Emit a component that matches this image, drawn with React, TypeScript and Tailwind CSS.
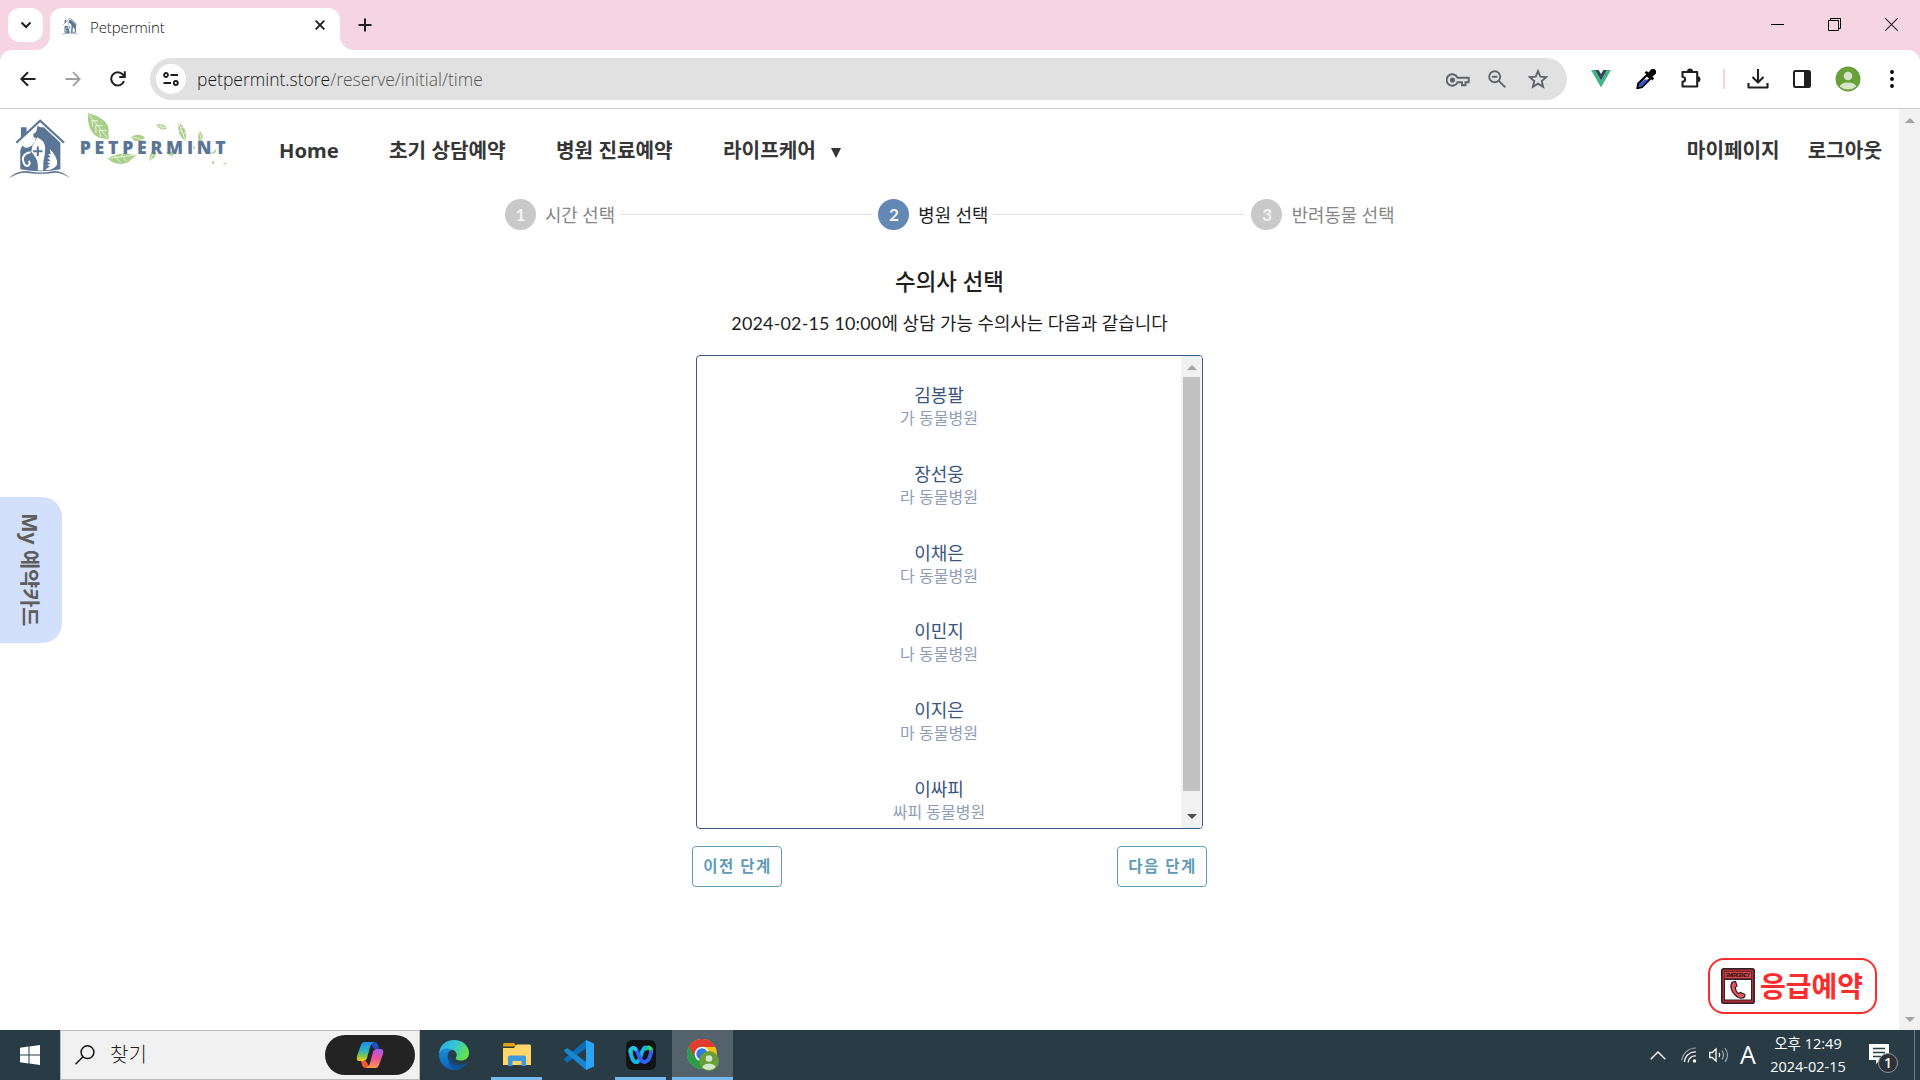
import React from "react";

const KR = "font-['Noto_Sans','Noto_Sans_CJK_KR',sans-serif]";

const doctors = [
  { name: "김봉팔", clinic: "가 동물병원" },
  { name: "장선웅", clinic: "라 동물병원" },
  { name: "이채은", clinic: "다 동물병원" },
  { name: "이민지", clinic: "나 동물병원" },
  { name: "이지은", clinic: "마 동물병원" },
  { name: "이싸피", clinic: "싸피 동물병원" },
];

/** House mark with the pets; drawn on a 190x180 canvas. */
function HouseMark({ className }: { className: string }) {
  return (
    <svg viewBox="0 0 190 180" className={className} preserveAspectRatio="none">
      <path d="M25 76 L97 11 L169 76" fill="none" stroke="#5a7596" strokeWidth="6.5" />
      <path d="M39 30h17v18l-17 15z" fill="#5a7596" />
      <path
        d="M89 26 L97 30 L108 30 L158 76 V154 Q98 166 37 154 V98 L43 84 L52 91 L62 90 L72 84 L82 72 L84 62 L77 59 L76 52 L86 42Z"
        fill="#5a7596"
      />
      <path d="M88 60 Q84 72 74 84 L70 102 L82 118 Q92 132 90 158 H106 L107 128 Q112 112 112 96 Q114 76 98 66Z" fill="#fff" />
      <path d="M68 104 Q44 108 45 126 Q48 146 60 144 Q70 138 62 130" fill="none" stroke="#fff" strokeWidth="6" />
      <path d="M126 94 Q152 122 148 140 Q138 158 112 156 L126 146 L118 142 L128 138 L118 132 L128 128 L119 121 L128 118 L121 109 L129 110Z" fill="#fff" />
      <path d="M90 87v28M76 101h28" stroke="#5a7596" strokeWidth="6" />
      <path d="M1 182 Q28 156 60 160 Q98 168 135 160 Q160 156 189 182 Q160 162 135 165 Q98 170 60 165 Q32 162 1 182Z" fill="#5a7596" />
    </svg>
  );
}

function Leaf({ d, vein }: { d: string; vein: string }) {
  return (
    <>
      <path d={d} fill="#a9cf8a" />
      <path d={vein} fill="none" stroke="#fff" strokeWidth="2.2" />
    </>
  );
}

function Wordmark() {
  return (
    <svg viewBox="240 34 450 170" className="h-[56.7px] w-[150px]">
      <Leaf d="M264 40 Q322 56 326 88 Q324 104 328 122 Q322 118 302 116 Q260 100 264 40Z" vein="M266 44 L328 122 M276 62 L278 80 M276 62 L294 64 M287 78 L288 100 M287 78 L308 78 M298 92 L302 112 M298 92 L320 92" />
      <Leaf d="M394 112 Q412 98 434 112 L426 124 H404Z" vein="M400 112 L432 122" />
      <Leaf d="M468 76 Q486 66 503 86 Q482 96 468 76Z" vein="M470 78 L502 85 M480 80 L486 74 M482 82L490 88" />
      <Leaf d="M536 70 Q564 84 556 124 Q530 106 536 70Z" vein="M537 72 L556 122 M542 84 L552 84 M546 96 L538 92 M550 102 L558 98" />
      <Leaf d="M598 92 Q612 104 606 124 H596 Q592 108 598 92Z" vein="M598 94 L604 122" />
      <Leaf d="M322 176 Q350 160 382 162 L410 166 Q390 182 384 188 Q350 202 322 176Z" vein="M326 176 L406 166 M342 174 L350 164 M348 174 L362 188 M362 172 L370 162 M368 172 L380 184" />
      <Leaf d="M458 148 Q476 160 462 174 Q452 180 446 186 Q448 166 458 148Z" vein="M448 184 L462 158" />
      <Leaf d="M498 158 L520 154 L518 172 Q504 168 498 158Z" vein="M500 160 L518 170" />
      <Leaf d="M630 160 Q642 154 650 146 Q648 168 630 160Z" vein="M634 160 L646 152" />
      <path d="M578 140l8 2-4 8zM635 188l9-5-4 12zM670 188l11 5-9 1z" fill="#a9cf8a" />
      <text
        x="239"
        y="163"
        textLength="438"
        lengthAdjust="spacing"
        className="fill-[#5a7596] font-['Open_Sans'] text-[53px] font-extrabold"
      >
        PETPERMINT
      </text>
    </svg>
  );
}

function TabStrip() {
  return (
    <div className="flex h-[50px] items-start bg-[#f6d5e3]">
      <div className="mt-2 ml-2 flex h-[34px] w-[35px] items-center justify-center rounded-xl bg-white">
        <svg viewBox="0 0 12 12" className="h-3 w-3">
          <path d="M1.500 3.500 6 8l4.500-4.500" fill="none" stroke="#1f1f1f" strokeWidth="2" />
        </svg>
      </div>
      <div className="relative mt-2 ml-[7px] flex h-[42px] w-[290px] items-center rounded-t-xl bg-white">
        <svg className="absolute bottom-0 -left-3.5 h-3.5 w-3.5" viewBox="0 0 14 14">
          <path d="M14 0V14H0A14 14 0 0 0 14 0Z" fill="#fff" />
        </svg>
        <svg className="absolute -right-3.5 bottom-0 h-3.5 w-3.5" viewBox="0 0 14 14">
          <path d="M0 0V14H14A14 14 0 0 1 0 0Z" fill="#fff" />
        </svg>
        <HouseMark className="mb-[7px] ml-[11px] h-[18px] w-[18px]" />
        <span className="ml-[11px] flex-1 pb-[4px] font-['Open_Sans'] text-[15px] font-light tracking-[-0.1px] text-[#111]">Petpermint</span>
        <svg viewBox="0 0 10 10" className="mr-[15px] mb-2 h-2.5 w-2.5">
          <path d="M.7.7l8.600 8.600M9.300.7L.7 9.300" stroke="#1f1f1f" strokeWidth="1.9" />
        </svg>
      </div>
      <svg viewBox="0 0 14 14" className="mt-[18px] ml-[18px] h-3.5 w-3.5">
        <path d="M7 .5v13M.5 7h13" stroke="#1f1f1f" strokeWidth="2" />
      </svg>
      <div className="mt-[18px] mr-[22px] ml-auto flex gap-[44px]">
        <svg viewBox="0 0 13 13" className="h-[13px] w-[13px]"><path d="M0 6.500h13" stroke="#000" /></svg>
        <svg viewBox="0 0 13 13" className="h-[13px] w-[13px]"><path d="M.5 2.500h10v10h-10zM2.500 2.500v-2h10v10h-2" fill="none" stroke="#000" /></svg>
        <svg viewBox="0 0 13 13" className="h-[13px] w-[13px]"><path d="M.3.3l12.400 12.400M12.700.3L.3 12.700" stroke="#222" strokeWidth="1.1" /></svg>
      </div>
    </div>
  );
}

function Toolbar() {
  return (
    <div className="bg-[#f6d5e3]">
      <div className="flex h-[59px] items-center rounded-t-xl border-b border-[#cacaca] bg-white">
        <svg viewBox="0 0 16 16" className="ml-5 h-4 w-4"><path d="M15.500 8H1.800M8 1.200L1.300 8 8 14.800" fill="none" stroke="#1f1f1f" strokeWidth="2" /></svg>
        <svg viewBox="0 0 16 16" className="ml-[29px] h-4 w-4"><path d="M.5 8h13.700M8 1.200L14.700 8 8 14.800" fill="none" stroke="#a0a0a0" strokeWidth="1.800" /></svg>
        <svg viewBox="0 0 16 16" className="ml-[29px] h-4 w-4"><path d="M14 10.200A6.600 6.600 0 1 1 12.800 3.500L14.600 5.200M14.800.3v5.600H9.300" fill="none" stroke="#1f1f1f" strokeWidth="2" /></svg>
        <div className="ml-6 flex h-[42px] w-[1417px] items-center rounded-full bg-[#e1e1e1]">
          <div className="ml-1.5 flex h-[30px] w-[30px] items-center justify-center rounded-full bg-white">
            <svg viewBox="0 0 16 14" className="h-3.5 w-4">
              <g fill="none" stroke="#1f1f1f" strokeWidth="1.800">
                <circle cx="3" cy="3" r="2" /><path d="M7.500 3H15M.5 11H8" /><circle cx="12.800" cy="11" r="2" />
              </g>
            </svg>
          </div>
          <span className="mt-px ml-[11px] flex-1 font-['Open_Sans'] text-[17.500px] font-light text-[#1a1a1a]">
            petpermint.store<span className="text-[#555]">/reserve/initial/time</span>
          </span>
          <svg viewBox="0 0 24 14" className="mt-0.5 h-3.5 w-6">
            <g fill="none" stroke="#5f6368" strokeWidth="1.900"><path d="M11.500 4.700A5.700 5.700 0 1 0 11.500 9.300H16v3h3.500v-3H22.700V4.700Z" /><circle cx="6.500" cy="7" r="1.600" fill="#5f6368" /></g>
          </svg>
          <svg viewBox="0 0 18 18" className="ml-[18px] h-[18px] w-[18px]">
            <g fill="none" stroke="#5f6368" strokeWidth="1.900"><circle cx="6.700" cy="6.700" r="5.500" /><path d="M4 6.700h5.400M10.800 10.800l6.500 6.500" /></g>
          </svg>
          <svg viewBox="0 0 20 20" className="mr-[19px] ml-[22px] h-5 w-5">
            <path d="M10 2.200l2.300 5.400 5.900.5-4.500 3.900 1.400 5.800L10 14.700l-5.100 3.100L6.300 12 1.800 8.100l5.900-.5z" fill="none" stroke="#5f6368" strokeWidth="1.900" />
          </svg>
        </div>
        <svg viewBox="0 0 20 18" className="ml-6 h-[18px] w-5"><path d="M0 0h4l6 10.400L16 0h4L10 17.500z" fill="#41b883" /><path d="M4 0h3.700L10 4l2.300-4H16l-6 10.400z" fill="#35495e" /></svg>
        <svg viewBox="0 0 20 20" className="ml-[25px] h-5 w-5">
          <path d="M11 6l3.500 3.500-8.500 8.500-4.500 1 .8-4.400z" fill="#fff" stroke="#000" strokeWidth="2.200" />
          <path d="M8.500 10.500h4l-6.700 6.800-3.300.7.700-3z" fill="#2f55d4" />
          <path d="M8.500 3.500l2-1.500 2 1.500 2.300-2.700a3 3 0 0 1 4.400 4.400L16.500 7.500l1.500 2-1.500 2z" fill="#000" />
        </svg>
        <svg viewBox="0 0 22 22" className="ml-6 h-[22px] w-[22px]">
          <path d="M2.500 4h14.700v14.500H2.500v-4.700c3.500-.5 3.500-4.600 0-5.100z" fill="none" stroke="#1f1f1f" strokeWidth="2.100" strokeLinejoin="round" />
          <path d="M7 3.500a3 3 0 0 1 6 0zM17.500 8.300a3 3 0 0 1 0 6z" fill="#1f1f1f" />
        </svg>
        <div className="ml-[21px] h-5 w-0.5 bg-[#f6d5e3]" />
        <svg viewBox="0 0 22 20" className="ml-[22px] h-5 w-[22px]"><path d="M11 0v13M5.500 8l5.500 5.500L16.500 8M1.500 14v4.500h19V14" fill="none" stroke="#1f1f1f" strokeWidth="2.100" strokeLinejoin="round" /></svg>
        <svg viewBox="0 0 18 18" className="ml-6 h-[18px] w-[18px]"><rect x="1" y="1" width="16" height="16" rx="1.500" fill="none" stroke="#1f1f1f" strokeWidth="2" /><path d="M11 1h6v16h-6z" fill="#1f1f1f" /></svg>
        <svg viewBox="0 0 26 26" className="ml-6 h-[26px] w-[26px]">
          <circle cx="13" cy="13" r="12.500" fill="#689f38" />
          <circle cx="13" cy="10" r="4.300" fill="#d5e5c8" />
          <path d="M4.800 20.500C6.500 15.200 19.500 15.200 21.200 20.500A12.500 12.500 0 0 1 4.800 20.500Z" fill="#d5e5c8" />
        </svg>
        <svg viewBox="0 0 4 18" className="ml-[29px] h-[18px] w-1"><circle cx="2" cy="2" r="1.900" /><circle cx="2" cy="9" r="1.900" /><circle cx="2" cy="16" r="1.900" /></svg>
      </div>
    </div>
  );
}

function SiteNav() {
  return (
    <nav className="flex h-[85px] items-start text-[20.200px] leading-[30px] font-bold whitespace-nowrap text-[#363636]">
      <HouseMark className="mt-[8px] ml-2 h-[61px] w-[63px]" />
      <div className="mt-[2px] ml-[9px]"><Wordmark /></div>
      <div className="mt-[26px] ml-[49px] flex w-[1157px] items-start">
        <span className="w-[110px]">Home</span>
        <span className="w-[167px]">초기 상담예약</span>
        <span className="w-[167px]">병원 진료예약</span>
        <span>라이프케어</span>
        <svg viewBox="0 0 10 10" className="mt-[13px] ml-[15px] h-2.5 w-2.5"><path d="M0 0h10L5 10z" fill="#363636" /></svg>
      </div>
      <div className="mt-[26px] mr-[17px] ml-auto flex gap-[28px]">
        <span>마이페이지</span>
        <span>로그아웃</span>
      </div>
    </nav>
  );
}

function Step({ n, label, active }: { n: number; label: string; active?: boolean }) {
  return (
    <div className="flex shrink-0 items-center">
      <span className={`flex h-[31px] w-[31px] items-center justify-center rounded-full pt-px pl-px font-['Lato'] text-[17px] font-bold text-[#f4f4f4] ${active ? "bg-[#6488b4]" : "bg-[#c9c9c9]"}`}>{n}</span>
      <span className={`ml-[9.500px] text-[17.800px] leading-6 whitespace-nowrap ${active ? "text-[#1e1e1e]" : "text-[#868686]"}`}>{label}</span>
    </div>
  );
}

function ListScrollbar() {
  return (
    <div className="flex w-[21px] flex-col items-center bg-[#f1f1f1]">
      <svg viewBox="0 0 10 5" className="mt-[9px] h-[5px] w-2.5"><path d="M0 5L5 0l5 5z" fill="#a3a3a3" /></svg>
      <div className="mt-[7px] h-[414px] w-[17px] bg-[#c1c1c1]" />
      <svg viewBox="0 0 10 5" className="mt-[23px] h-[5px] w-2.5"><path d="M0 0L5 5l5-5z" fill="#505050" /></svg>
    </div>
  );
}

function StepButton({ children }: { children: React.ReactNode }) {
  return (
    <button className="h-[41px] w-[90px] rounded border border-[#5f9bb9] bg-white pt-px pl-px text-[15.500px] font-bold tracking-[1.500px] whitespace-nowrap text-[#5f9bb9]">
      {children}
    </button>
  );
}

function PhoneIcon() {
  return (
    <svg viewBox="0 0 34 36" className="h-9 w-[34px]">
      <rect x=".8" y=".8" width="32.400" height="34.400" rx="2" fill="#b92b33" stroke="#2d2226" strokeWidth="1.600" />
      <rect x="3.500" y="11.500" width="27" height="20.500" fill="#fff" stroke="#2d2226" />
      <rect x="3.500" y="3.500" width="27" height="7" fill="#d9474d" stroke="#2d2226" strokeWidth=".6" />
      <text x="5" y="9" textLength="24" className="fill-[#2d1114] font-['Liberation_Sans'] text-[5px] font-bold">EMERGENCY</text>
      <path d="M11.500 14c-3 3-1.500 9.500 2.500 13 3 3 7 4 9.500 2l.5-2.500-4.500-2-2 1c-2-1-3.500-4-3-6.500l1.500-1-1.500-4.500z" fill="#e8555a" stroke="#2d2226" strokeWidth="1.200" />
    </svg>
  );
}

function Page() {
  return (
    <div className={`flex h-[921px] bg-white ${KR}`}>
      <div className="relative min-w-0 flex-1">
        <SiteNav />
        <main className="mx-auto flex w-[890px] flex-col items-center">
          <div className="mt-[5px] flex h-[31px] w-full items-center">
            <Step n={1} label="시간 선택" />
            <div className="mr-[6px] mb-px ml-[5px] h-px flex-1 bg-[#e0e0e0]" />
            <Step n={2} label="병원 선택" active />
            <div className="mr-[6px] mb-px ml-[5px] h-px flex-1 bg-[#e0e0e0]" />
            <Step n={3} label="반려동물 선택" />
          </div>
          <h2 className="mt-[36px] text-[22.400px] leading-8 font-medium text-[#1e1e1e]">수의사 선택</h2>
          <p className="mt-[13px] h-6 font-['Lato','Noto_Sans_CJK_KR',sans-serif] text-[17.900px] leading-6 text-[#1e1e1e]">
            <span className="tracking-[0.2px]">2024-02-15 10:00</span>에 상담 가능 수의사는 다음과 같습니다
          </p>
          <div className="mt-[20px] flex h-[474px] w-[507px] overflow-hidden rounded border border-[#39598a] bg-white">
            <ul className="flex-1 pt-[27px]">
              {doctors.map((d) => (
                <li key={d.name} className="h-[78.750px] text-center">
                  <div className="text-[18px] leading-6 text-[#38557f]">{d.name}</div>
                  <div className="text-[16px] leading-[23px] text-[#8c9db8]">{d.clinic}</div>
                </li>
              ))}
            </ul>
            <ListScrollbar />
          </div>
          <div className="mt-[17px] flex w-[515px] justify-between">
            <StepButton>이전 단계</StepButton>
            <StepButton>다음 단계</StepButton>
          </div>
        </main>
        <div className="absolute top-[388px] left-0 flex h-[146px] w-[62px] items-center justify-center rounded-r-[20px] bg-[#d2e0fc] pr-0.5">
          <span className="text-[20.800px] leading-none font-bold whitespace-nowrap text-[#5c5c5c] [text-orientation:sideways] [writing-mode:vertical-rl]">My 예약카드</span>
        </div>
        <div className="absolute right-[22px] bottom-4 flex h-14 w-[169px] items-center rounded-2xl border-2 border-[#fb2c2c] bg-white pl-[11px]">
          <PhoneIcon />
          <span className="ml-[5px] text-[28px] leading-none font-bold whitespace-nowrap text-[#fb2c2c]">응급예약</span>
        </div>
      </div>
      <div className="flex w-[21px] flex-col items-center justify-between bg-[#f1f1f1] pt-[9px] pb-2">
        <svg viewBox="0 0 10 5" className="h-[5px] w-2.5"><path d="M0 5L5 0l5 5z" fill="#a3a3a3" /></svg>
        <svg viewBox="0 0 10 5" className="h-[5px] w-2.5"><path d="M0 0L5 5l5-5z" fill="#a3a3a3" /></svg>
      </div>
    </div>
  );
}

function CopilotIcon() {
  return (
    <svg viewBox="0 0 28 28" className="h-7 w-7">
      <defs>
        <linearGradient id="cpA" x1="0" y1="0" x2="0" y2="1"><stop offset="0" stopColor="#1f8fe8" /><stop offset=".45" stopColor="#27b6c4" /><stop offset=".75" stopColor="#8bc34a" /><stop offset="1" stopColor="#fbd21c" /></linearGradient>
        <linearGradient id="cpB" x1="0" y1="0" x2="0" y2="1"><stop offset="0" stopColor="#a85af0" /><stop offset=".5" stopColor="#ee5097" /><stop offset="1" stopColor="#fba04c" /></linearGradient>
      </defs>
      <path d="M14 1h5q2 0 3 3l1 4h-5z" fill="#1f4fc9" />
      <path d="M14 27H9q-2 0-3-3l-1-4h5z" fill="#f2582c" />
      <path d="M8 1h10q-3 1-4 5l-3 11q-1 3-4 3H3q-3 0-2-5L5 4q1-3 3-3z" fill="url(#cpA)" />
      <path d="M20 27H10q3-1 4-5l3-11q1-3 4-3h4q3 0 2 5l-4 11q-1 3-3 3z" fill="url(#cpB)" />
    </svg>
  );
}

function EdgeIcon() {
  return (
    <svg viewBox="0 0 30 30" className="h-[30px] w-[30px]">
      <defs>
        <linearGradient id="edA" x1="0" y1="0" x2="1" y2=".4"><stop offset="0" stopColor="#2aa5e0" /><stop offset=".55" stopColor="#35c6d6" /><stop offset="1" stopColor="#5fe04c" /></linearGradient>
        <linearGradient id="edB" x1="0" y1="0" x2="0" y2="1"><stop offset="0" stopColor="#1b8fd6" /><stop offset="1" stopColor="#0c5fb5" /></linearGradient>
      </defs>
      <path d="M0 15C0 5 7 0 15 0 25 0 30 7 30 13c0 5-4 7.500-8 7.500-4 0-6-1.500-5-3 2-3 0-8-6-8C5 9.500 0 12 0 15Z" fill="url(#edA)" />
      <path d="M0 15C1 8.500 8 7 13 10c-5 1-6 8-2 12 4 4.500 12 5 17 .5C24 29 18 31 12 29.700 5 28 0 22 0 15Z" fill="url(#edB)" />
      <path d="M11.500 12C7 17 9 27 17 29.500 21 29 26 27 28.500 22.500 19 27.500 10.500 21 11.500 12Z" fill="#114a8b" opacity=".75" />
    </svg>
  );
}

function FolderIcon() {
  return (
    <svg viewBox="0 0 28 24" className="h-6 w-7">
      <path d="M0 1.500Q0 0 1.500 0H11l3 3.500H0z" fill="#e0a100" />
      <path d="M0 5h11l3-3.500h12.500Q28 1.500 28 3v19H0z" fill="#ffd768" />
      <path d="M5 14.500q0-2 2-2h14q2 0 2 2V23h-4.500v-5h-9v5H5z" fill="#3f97dd" />
    </svg>
  );
}

function CodeIcon() {
  return (
    <svg viewBox="0 0 30 30" className="h-[30px] w-[30px]">
      <path d="M22 0l8 3.500v23L22 30z" fill="#2aa4f4" />
      <path d="M22 0v8L3.500 22.500.5 20.500q-1-1 0-2z" fill="#0a6fb8" />
      <path d="M22 30v-8L3.500 8 .5 9.800q-1 1 0 2z" fill="#1687d0" />
    </svg>
  );
}

function WebexIcon() {
  return (
    <svg viewBox="0 0 30 30" className="h-[30px] w-[30px]">
      <rect width="30" height="30" rx="6" fill="#111315" />
      <g fill="none" strokeWidth="4" strokeLinecap="round">
        <path d="M20 8.500c3-2.500 5.500.5 5 3" stroke="#35d46a" />
        <path d="M4.500 10c.5 8 3 12.500 6.500 12 4-1 4-13.500 8.500-14.500" stroke="#18b4e8" />
        <path d="M4.500 10q2-4 5.500-.5c3 4 4 13 8.500 12.500 4-.5 6-6 6.500-10" stroke="#2d62f3" />
        <path d="M4.300 11.500c.5-3.500 3-4.500 5-2.500" stroke="#1fc8d8" />
      </g>
    </svg>
  );
}

function ChromeIcon() {
  return (
    <svg viewBox="0 0 32 32" className="h-8 w-8">
      <circle cx="15" cy="15" r="15" fill="#fbc116" />
      <path d="M15 15L2 7.500A15 15 0 0 0 15 30l6.500-11.300z" fill="#2a9c4b" />
      <path d="M15 15V8h13.300A15 15 0 0 0 2 7.500l6.500 11.300z" fill="#e33b2e" />
      <circle cx="15" cy="15" r="7.300" fill="#fff" />
      <circle cx="15" cy="15" r="5.700" fill="#3078e8" />
      <circle cx="22" cy="22" r="10" fill="#689f38" />
      <circle cx="22" cy="19.500" r="3.300" fill="#d5e5c8" />
      <path d="M15.500 28.500c0-5 13-5 13 0a10 10 0 0 1-13 0Z" fill="#d5e5c8" />
    </svg>
  );
}

function TaskApp({ children, bar, active, className }: { children: React.ReactNode; bar?: boolean; active?: boolean; className: string }) {
  return (
    <div className={`flex h-[50px] flex-col items-center ${active ? "bg-[#54636b]" : ""} ${className}`}>
      <div className="flex flex-1 items-center justify-center pt-[3px]">{children}</div>
      <div className={`h-[3px] w-full ${bar ? "bg-[#76b9ed]" : ""}`} />
    </div>
  );
}

function Taskbar() {
  return (
    <div className="flex h-[50px] items-center bg-[#293c46] text-white">
      <svg viewBox="0 0 20 20" className="ml-5 h-5 w-5"><path d="M0 2.800L8.500 1.600v8H0zM9.500 1.500L20 0v9.600H9.500zM0 10.500h8.500v8L0 17.300zM9.500 10.500H20V20L9.500 18.600z" fill="#fff" /></svg>
      <div className="ml-5 flex h-[50px] w-[360px] items-center border border-[#bcbcbc] bg-[#f1f1f1]">
        <svg viewBox="0 0 20 20" className="ml-3.5 h-5 w-5"><g fill="none" stroke="#111" strokeWidth="1.500"><circle cx="12.500" cy="7.200" r="6.400" /><path d="M8 11.800L.5 19.300" /></g></svg>
        <span className="mb-[3px] ml-[15px] flex-1 font-['Noto_Sans_CJK_KR',sans-serif] text-[20px] leading-6 font-light text-[#222]">찾기</span>
        <div className="mr-1 flex h-10 w-[90px] items-center justify-center rounded-full bg-[#232323]"><CopilotIcon /></div>
      </div>
      <TaskApp className="ml-[8px] w-[51px]"><EdgeIcon /></TaskApp>
      <TaskApp className="ml-[12px] w-[51px]" bar><FolderIcon /></TaskApp>
      <TaskApp className="ml-[11px] w-[51px]"><CodeIcon /></TaskApp>
      <TaskApp className="ml-[11px] w-[51px]" bar><WebexIcon /></TaskApp>
      <TaskApp className="ml-1.5 w-[61px]" bar active><ChromeIcon /></TaskApp>
      <div className="ml-auto flex h-full items-center">
        <svg viewBox="0 0 16 9" className="h-[9px] w-4"><path d="M.7 8.300L8 1l7.300 7.300" fill="none" stroke="#fff" strokeWidth="1.400" /></svg>
        <svg viewBox="0 0 16 16" className="ml-[15px] h-4 w-4">
          <g fill="none" stroke="#fff" strokeWidth="1.200"><path d="M.8 13.500A14 14 0 0 1 15 1" opacity=".5" /><path d="M3.500 15A10.500 10.500 0 0 1 15 5M7 15.500A7 7 0 0 1 15 9" /></g>
          <circle cx="13.500" cy="14" r="1.700" fill="#fff" />
        </svg>
        <svg viewBox="0 0 21 16" className="ml-[12px] h-4 w-[21px]">
          <path d="M.7 5.500h2.500L7 2v12l-3.800-3.500H.7z" fill="none" stroke="#fff" strokeWidth="1.300" />
          <path d="M10 5.800q1.500 2.200 0 4.400" fill="none" stroke="#fff" strokeWidth="1.200" />
          <path d="M13 3.500q3 4.500 0 9M16 1q5 7 0 14" fill="none" stroke="#fff" strokeWidth="1.200" opacity=".55" />
        </svg>
        <span className="mb-0.5 ml-[9px] w-[18px] text-center font-['Open_Sans'] text-[25px] leading-none">A</span>
        <div className="mb-px ml-[10px] w-[82px] text-center font-['Open_Sans','Noto_Sans_CJK_KR',sans-serif] text-[14.500px] leading-[23px] font-normal whitespace-nowrap">
          <div>오후 12:49</div>
          <div>2024-02-15</div>
        </div>
        <div className="relative ml-[20px] h-[22px] w-[20px]">
          <svg viewBox="0 0 20 20" className="h-5 w-5"><path d="M0 0h20v16h-9l-4 4v-4H0z" fill="#fff" /><path d="M4 4.500h12M4 8.500h12M4 12.500h8" stroke="#293c46" strokeWidth="1.300" /></svg>
          <span className="absolute top-[9px] left-[9px] flex h-5 w-5 items-center justify-center rounded-full border border-[#8d969b] bg-[#2d3336] font-['Open_Sans'] text-[14px] leading-none font-semibold">1</span>
        </div>
        <div className="mr-[5px] ml-[25px] h-full w-px bg-[#6d7a81]" />
      </div>
    </div>
  );
}

export default function App() {
  return (
    <div className="h-[1080px] w-[1920px] overflow-hidden">
      <TabStrip />
      <Toolbar />
      <Page />
      <Taskbar />
    </div>
  );
}
